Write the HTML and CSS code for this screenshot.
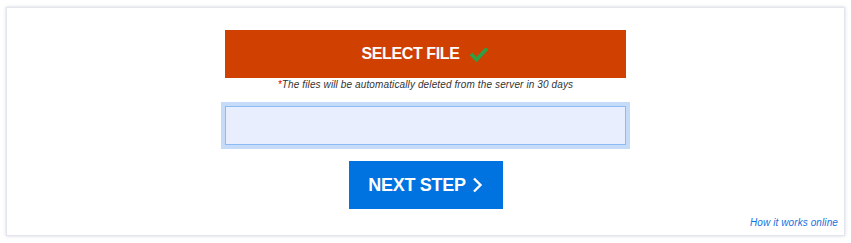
FILE: index.html
```html
<!DOCTYPE html>
<html lang="en">
<head>
    <meta charset="UTF-8">
    <title>Upload File</title>
    <link rel="stylesheet" href="styles.css">
</head>
<body>

    <!-- Upload Card -->
    <div class="upload-card">
        <button class="select-btn">
            <span>SELECT FILE</span>
            <svg class="check" width="20" height="16" viewBox="0 0 20 16"><path d="M2 8 L7.5 13.5 L18 2.5" fill="none" stroke="#2ea043" stroke-width="3.8"/></svg>
        </button>
        <p class="note"><span class="star">*</span>The files will be automatically deleted from the server in 30 days</p>

        <!-- Drop field -->
        <div class="field-wrap">
            <div class="field"></div>
        </div>

        <button class="next-btn">
            <span>NEXT STEP</span>
            <svg class="chevron" width="12" height="16" viewBox="0 0 12 16"><path d="M3 1.5 L9.5 8 L3 14.5" fill="none" stroke="#fff" stroke-width="2.4"/></svg>
        </button>

        <a class="how-link" href="#">How it works online</a>
    </div>

</body>
</html>
```

FILE: styles.css
```css
/* General Styles */
body {
    font-family: 'Liberation Sans', Arial, sans-serif;
    background-color: #ffffff;
    margin: 0;
    padding: 7px 6px;
}

/* Card */
.upload-card {
    display: flex;
    flex-direction: column;
    align-items: center;
    height: 229px;
    box-sizing: border-box;
    padding-top: 22px;
    border: 1px solid #e3e6ec;
    box-shadow: 0 0 3px rgba(150, 160, 180, 0.45);
    background: #fff;
}

/* Buttons */
.select-btn, .next-btn {
    display: flex;
    align-items: center;
    justify-content: center;
    border: none;
    color: #fff;
    font-family: 'Liberation Sans', Arial, sans-serif;
    font-weight: bold;
    cursor: pointer;
    padding: 0;
}

.select-btn {
    width: 401px;
    height: 48px;
    background-color: #d04000;
    font-size: 16px;
    letter-spacing: -0.4px;
}

.select-btn .check {
    margin-left: 10px;
}

.note {
    margin: 1px 0 0;
    font-size: 10px;
    letter-spacing: 0.12px;
    font-style: italic;
    color: #333;
}

.note .star {
    color: #e00000;
}

/* Drop field */
.field-wrap {
    margin-top: 12px;
    padding: 4px;
    background-color: #c5dbf8;
}

.field {
    width: 399px;
    height: 37px;
    border: 1px solid #8bbcf5;
    background-color: #e8eefe;
}

.next-btn {
    margin-top: 12px;
    width: 154px;
    height: 48px;
    background-color: #0073e0;
    font-size: 18px;
    letter-spacing: -0.3px;
}

.next-btn .chevron {
    margin-left: 5px;
}

.how-link {
    align-self: flex-end;
    margin: 8px 6px 0 0;
    font-size: 10px;
    letter-spacing: 0.1px;
    font-style: italic;
    color: #1a6fe0;
    text-decoration: none;
}
```
